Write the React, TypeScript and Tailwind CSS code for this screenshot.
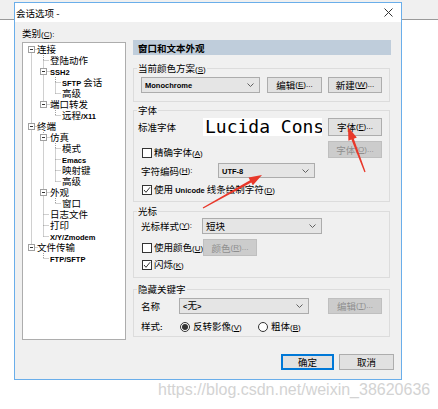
import React from "react";

const latin = "font-['Liberation_Sans',sans-serif] text-[7.5px] font-bold";

// split a label into CJK runs and latin runs (latin is drawn smaller)
const Txt = ({ s }: { s: string }) => (
  <>
    {s.split(/([\x21-\x7E]+)/).map((part, i) =>
      /^[\x21-\x7E]+$/.test(part) ? (
        <span key={i} className={latin}>
          {part}
        </span>
      ) : (
        <span key={i}>{part}</span>
      )
    )}
  </>
);

// mnemonic like (S)...
const Mn = ({ k, tail = "" }: { k: string; tail?: string }) => (
  <span className="font-['Liberation_Sans',sans-serif] text-[8px] font-normal">
    (<span className="underline">{k}</span>){tail}
  </span>
);

const Btn = ({
  cls,
  off,
  primary,
  children,
}: {
  cls: string;
  off?: boolean;
  primary?: boolean;
  children: React.ReactNode;
}) => (
  <div
    className={`${cls} flex items-center justify-center border whitespace-nowrap ${
      off
        ? "bg-[#cccccc] border-[#bfbfbf] text-[#8f8f8f]"
        : primary
        ? "bg-[#e1e1e1] border-[#0078d7] shadow-[inset_0_0_0_1px_#0078d7]"
        : "bg-[#e1e1e1] border-[#adadad]"
    }`}
  >
    {children}
  </div>
);

const Chevron = () => (
  <svg width="7" height="4" viewBox="0 0 7 4" className="shrink-0">
    <path d="M0.5 0.5 L3.5 3.5 L6.5 0.5" fill="none" stroke="#606060" strokeWidth="1" />
  </svg>
);

const Combo = ({ text, cls }: { text: string; cls: string }) => (
  <div
    className={`${cls} flex items-center justify-between border border-[#acacac] bg-[#e5e5e5] pl-[3px] pr-[5px]`}
  >
    <span className="whitespace-nowrap">
      <Txt s={text} />
    </span>
    <Chevron />
  </div>
);

const Check = ({ on }: { on?: boolean }) => (
  <span className="w-[10px] h-[10px] border border-[#333333] bg-white flex items-center justify-center shrink-0">
    {on && (
      <svg width="8" height="8" viewBox="0 0 8 8">
        <path d="M1 4 L3 6.3 L7 1.3" fill="none" stroke="#333333" strokeWidth="1" />
      </svg>
    )}
  </span>
);

const Radio = ({ on }: { on?: boolean }) => (
  <span className="w-[10px] h-[10px] rounded-full border border-[#333333] bg-white flex items-center justify-center shrink-0">
    {on && <span className="w-[6px] h-[6px] rounded-full bg-[#333333]" />}
  </span>
);

const Group = ({
  title,
  cls,
  children,
}: {
  title: React.ReactNode;
  cls: string;
  children: React.ReactNode;
}) => (
  <fieldset className={`w-[257px] border border-[#dcdcdc] ${cls}`}>
    <legend className="ml-[3px] px-[1px] h-[14px] leading-[14px]">{title}</legend>
    {children}
  </fieldset>
);

type Node = [number, string, boolean?];

const tree: Node[] = [
  [0, "连接", true],
  [1, "登陆动作"],
  [1, "SSH2", true],
  [2, "SFTP 会话"],
  [2, "高级"],
  [1, "端口转发", true],
  [2, "远程/X11"],
  [0, "终端", true],
  [1, "仿真", true],
  [2, "模式"],
  [2, "Emacs"],
  [2, "映射键"],
  [2, "高级"],
  [1, "外观", true],
  [2, "窗口"],
  [1, "日志文件"],
  [1, "打印"],
  [1, "X/Y/Zmodem"],
  [0, "文件传输", true],
  [1, "FTP/SFTP"],
];

const indent = ["pl-[14px]", "pl-[27px]", "pl-[39px]"];

const rowC = (i: number) => 6.5 + 11 * i;
const colX = (l: number) => 8.5 + 12 * l;

const TreeLines = () => {
  const lines: React.ReactNode[] = [];
  const boxes: React.ReactNode[] = [];
  tree.forEach(([lvl, , exp], i) => {
    const x = colX(lvl);
    const y = rowC(i);
    lines.push(<line key={`h${i}`} x1={exp ? x + 3 : x} y1={y} x2={x + 6} y2={y} />);
    for (let j = i - 1; j >= 0; j--) {
      if (tree[j][0] === lvl) {
        lines.push(<line key={`v${i}`} x1={x} y1={rowC(j)} x2={x} y2={y} />);
        break;
      }
      if (tree[j][0] < lvl) {
        lines.push(<line key={`v${i}`} x1={x} y1={rowC(j) + 5.5} x2={x} y2={y} />);
        break;
      }
    }
    if (exp) {
      boxes.push(
        <g key={`b${i}`}>
          <rect x={x - 3} y={y - 3} width="6" height="6" fill="white" stroke="#a0a0a0" />
          <line x1={x - 1.5} y1={y} x2={x + 1.5} y2={y} stroke="#333333" />
        </g>
      );
    }
  });
  return (
    <svg className="absolute left-0 top-0" width="102" height="296">
      <g stroke="#a0a0a0" strokeDasharray="1 1">{lines}</g>
      {boxes}
    </svg>
  );
};

const arrowPoints = (x1: number, y1: number, x2: number, y2: number) => {
  const dx = x2 - x1;
  const dy = y2 - y1;
  const len = Math.hypot(dx, dy);
  const ux = dx / len;
  const uy = dy / len;
  const nx = -uy;
  const ny = ux;
  const head = 13;
  const hw = 4.5;
  const s0 = 0.6;
  const s1 = 1.3;
  const bx = x2 - ux * head;
  const by = y2 - uy * head;
  return [
    [x1 + nx * s0, y1 + ny * s0],
    [bx + nx * s1, by + ny * s1],
    [bx + nx * hw, by + ny * hw],
    [x2, y2],
    [bx - nx * hw, by - ny * hw],
    [bx - nx * s1, by - ny * s1],
    [x1 - nx * s0, y1 - ny * s0],
  ]
    .map((p) => p.map((v) => v.toFixed(1)).join(","))
    .join(" ");
};

export default function App() {
  return (
    <div className="relative w-[438px] h-[409px] overflow-hidden bg-white text-black text-[9.5px] leading-[12px] font-['Noto_Sans_CJK_SC',sans-serif]">
      {/* window behind the dialog */}
      <div className="absolute left-0 top-0 w-full h-[20px] bg-[#f0f0f0] border-b border-[#9a9a9a]" />

      <div className="relative ml-[14px] mt-[2px] w-[388px] h-[378px] border border-[#6aaeea] bg-[#f0f0f0] flex flex-col">
        <div className="h-[19px] bg-white flex items-center justify-between pl-[1px] pr-[8px]">
          <span>会话选项 -</span>
          <svg width="9" height="9" viewBox="0 0 9 9">
            <path d="M0.5 0.5 L8.5 8.5 M8.5 0.5 L0.5 8.5" stroke="#333333" strokeWidth="1" />
          </svg>
        </div>

        <div className="flex items-start pl-[7px] pt-[4px]">
          {/* category tree */}
          <div className="w-[104px] flex flex-col">
            <div className="h-[14px] leading-[14px] whitespace-nowrap">
              类别<Mn k="C" tail=":" />
            </div>
            <div className="relative mt-[2px] h-[298px] border border-[#adadad] bg-white pt-[1px]">
              <TreeLines />
              {tree.map(([lvl, label], i) => (
                <div key={i} className={`relative h-[11px] leading-[11px] whitespace-nowrap ${indent[lvl]}`}>
                  <Txt s={label} />
                </div>
              ))}
            </div>
          </div>

          {/* settings panel */}
          <div className="ml-[7px] mt-[14px] w-[258px] flex flex-col">
            <div className="h-[15px] bg-[#bfcddb] flex items-center pl-[5px] font-bold">窗口和文本外观</div>

            <Group title={<>当前颜色方案<Mn k="S" /></>} cls="mt-[6px] pb-[8px]">
              <div className="mt-[2px] h-[16px] flex pl-[7px]">
                <Combo text="Monochrome" cls="w-[119px]" />
                <Btn cls="ml-[7px] w-[55px]">
                  编辑<Mn k="E" tail="..." />
                </Btn>
                <Btn cls="ml-[6px] w-[54px]">
                  新建<Mn k="W" tail="..." />
                </Btn>
              </div>
            </Group>

            <Group title="字体" cls="mt-[1px] pb-[5px]">
              <div className="mt-[1px] h-[18px] flex pl-[4px]">
                <div className="w-[65px] flex items-center">标准字体</div>
                <div className="w-[119px] bg-white overflow-hidden flex items-center pl-[2px]">
                  <span className="font-['DejaVu_Sans_Mono',monospace] text-[18px] leading-[18px] whitespace-nowrap">
                    Lucida Console
                  </span>
                </div>
                <Btn cls="ml-[6px] w-[54px]">
                  字体<Mn k="F" tail="..." />
                </Btn>
              </div>
              <div className="mt-[5px] h-[17px] flex pl-[8px]">
                <div className="w-[186px] flex items-center pt-[6px] gap-[2px] whitespace-nowrap">
                  <Check />
                  <span>
                    精确字体<Mn k="A" />
                  </span>
                </div>
                <Btn cls="w-[54px]" off>
                  字体<Mn k="O" tail="..." />
                </Btn>
              </div>
              <div className="mt-[5px] h-[15px] flex pl-[7px]">
                <div className="w-[77px] flex items-center whitespace-nowrap">
                  字符编码<Mn k="H" tail=":" />
                </div>
                <Combo text="UTF-8" cls="w-[97px]" />
              </div>
              <div className="mt-[6px] h-[12px] flex items-center gap-[2px] pl-[8px] whitespace-nowrap">
                <Check on />
                <span>
                  <Txt s="使用 Unicode 线条绘制字符" />
                  <Mn k="D" />
                </span>
              </div>
            </Group>

            <Group title="光标" cls="mt-[2px] pb-[6px]">
              <div className="h-[16px] flex pl-[7px]">
                <div className="w-[61px] flex items-center whitespace-nowrap">
                  光标样式<Mn k="Y" tail=":" />
                </div>
                <Combo text="短块" cls="w-[120px]" />
              </div>
              <div className="mt-[5px] h-[17px] flex pl-[8px]">
                <div className="w-[61px] flex items-center gap-[2px] whitespace-nowrap">
                  <Check />
                  <span>
                    使用颜色<Mn k="U" />
                  </span>
                </div>
                <Btn cls="w-[54px]" off>
                  颜色<Mn k="R" tail="..." />
                </Btn>
              </div>
              <div className="mt-[3px] h-[12px] flex items-center gap-[2px] pl-[8px] whitespace-nowrap">
                <Check on />
                <span>
                  闪烁<Mn k="K" />
                </span>
              </div>
            </Group>

            <Group title="隐藏关键字" cls="mt-[4px] pb-[3px]">
              <div className="mt-[2px] h-[16px] flex pl-[7px]">
                <div className="w-[38px] flex items-center">名称</div>
                <Combo text="<无>" cls="w-[130px]" />
                <Btn cls="ml-[19px] w-[54px]" off>
                  编辑<Mn k="T" tail="..." />
                </Btn>
              </div>
              <div className="mt-[7px] h-[12px] flex items-center pl-[7px] whitespace-nowrap">
                <div className="w-[39px]">
                  <Txt s="样式:" />
                </div>
                <div className="w-[78px] flex items-center gap-[3px]">
                  <Radio on />
                  <span>
                    反转影像<Mn k="V" />
                  </span>
                </div>
                <div className="flex items-center gap-[3px]">
                  <Radio />
                  <span>
                    粗体<Mn k="B" />
                  </span>
                </div>
              </div>
            </Group>
          </div>
        </div>

        <div className="mt-[14px] h-[16px] flex justify-end pr-[7px]">
          <Btn cls="w-[53px]" primary>
            确定
          </Btn>
          <Btn cls="ml-[5px] w-[55px]">取消</Btn>
        </div>
      </div>

      <div className="mt-[1px] ml-[158px] h-[18px] leading-[18px] text-[16px] font-['Liberation_Sans',sans-serif] text-[#d3d3d3] whitespace-nowrap">
        https://blog.csdn.net/weixin_38620636
      </div>

      {/* annotation arrows */}
      <svg className="absolute left-0 top-0 pointer-events-none" width="438" height="409">
        <polygon points={arrowPoints(365, 172, 348, 127)} fill="#e8382a" />
        <polygon points={arrowPoints(203, 208, 262, 175)} fill="#e8382a" />
      </svg>
    </div>
  );
}
